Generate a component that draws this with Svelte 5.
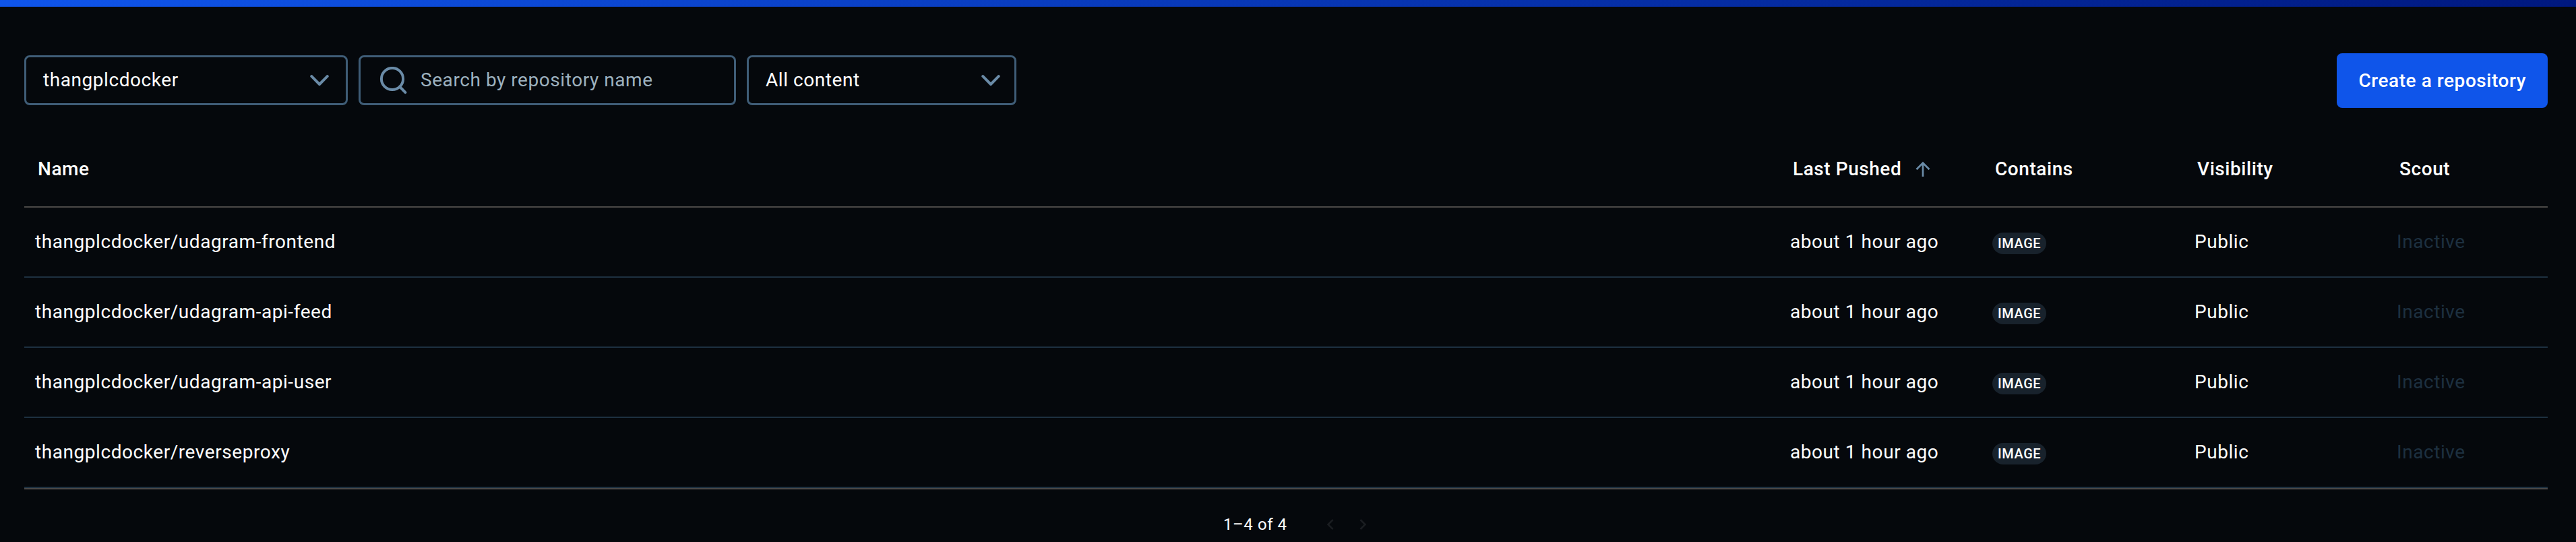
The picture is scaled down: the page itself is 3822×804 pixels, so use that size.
<script>
  const columns = ['Name', 'Last Pushed', 'Contains', 'Visibility', 'Scout'];
  const repositories = ['udagram-frontend', 'udagram-api-feed', 'udagram-api-user', 'reverseproxy'].map((name) => ({
    name: `thangplcdocker/${name}`,
    pushed: 'about 1 hour ago',
    contains: 'IMAGE',
    visibility: 'Public',
    scout: 'Inactive'
  }));
</script>

{#snippet chevron()}
  <svg class="chevron" width="28" height="17" viewBox="0 0 28 17" aria-hidden="true">
    <path d="M2.3 2.2 14 14l11.7-11.8" />
  </svg>
{/snippet}

<div class="page">
  <div class="accent"></div>
  <main>
    <div class="toolbar">
      <div class="field account"><span>thangplcdocker</span>{@render chevron()}</div>
      <div class="field search">
        <svg width="41" height="41" viewBox="0 0 41 41" aria-hidden="true">
          <circle cx="19" cy="18" r="16.1" />
          <path d="M30 29.5l8.4 8.6" />
        </svg>
        <span>Search by repository name</span>
      </div>
      <div class="field content"><span>All content</span>{@render chevron()}</div>
      <button type="button">Create a repository</button>
    </div>

    <div class="table">
      <div class="row head">
        {#each columns as column}
          <div class="cell">
            {column}
            {#if column === 'Last Pushed'}
              <svg class="sort" width="24" height="24" viewBox="0 0 24 24" aria-hidden="true">
                <path d="M12 23V3M2.5 12.2 12 2.7l9.5 9.5" />
              </svg>
            {/if}
          </div>
        {/each}
      </div>
      {#each repositories as repo}
        <div class="row">
          <div class="cell">{repo.name}</div>
          <div class="cell">{repo.pushed}</div>
          <div class="cell"><span class="badge">{repo.contains}</span></div>
          <div class="cell">{repo.visibility}</div>
          <div class="cell muted">{repo.scout}</div>
        </div>
      {/each}
    </div>

    <div class="pagination">
      <span>1–4 of 4</span>
      <div class="pager">
        <svg width="32" height="32" viewBox="0 0 24 24" aria-hidden="true">
          <path d="M15.41 16.59 10.83 12l4.58-4.59L14 6l-6 6 6 6z" />
        </svg>
        <svg width="32" height="32" viewBox="0 0 24 24" aria-hidden="true">
          <path d="M8.59 16.59 13.17 12 8.59 7.41 10 6l6 6-6 6z" />
        </svg>
      </div>
    </div>
  </main>
</div>

<style>
  :global(body) {
    margin: 0;
    background: #05080c;
  }

  .page {
    box-sizing: border-box;
    height: 804px;
    overflow: hidden;
    background: #05080c;
    color: #fff;
    font: 400 28px/32px Roboto, sans-serif;
    letter-spacing: 0.02em;
  }

  .accent {
    height: 10px;
    background: linear-gradient(90deg, #0f55eb, #00187f);
  }

  main {
    padding: 69px 42px 0 36px;
  }

  .toolbar {
    display: flex;
    align-items: flex-start;
    gap: 16px;
    height: 81px;
  }

  .field {
    box-sizing: border-box;
    display: flex;
    align-items: center;
    height: 74px;
    margin-top: 3px;
    border: 3px solid #3f5d77;
    border-radius: 8px;
  }

  .account {
    width: 480px;
    justify-content: space-between;
    padding: 0 25px;
  }

  .search {
    width: 560px;
    gap: 20px;
    padding-left: 28px;
    color: #9db1bf;
  }

  .search svg,
  .chevron,
  .sort {
    flex: none;
    fill: none;
    stroke: #6a8ba7;
    stroke-width: 4;
    stroke-linecap: round;
    stroke-linejoin: round;
  }

  .content {
    width: 400px;
    justify-content: space-between;
    padding: 0 21px 0 25px;
  }

  button {
    height: 81px;
    margin-left: auto;
    padding: 0 32px;
    border: 0;
    border-radius: 8px;
    background: #0f55ea;
    color: #fff;
    font: 500 28px/32px Roboto, sans-serif;
    letter-spacing: 0.02em;
  }

  .table {
    margin-top: 33px;
    border-bottom: 2px solid #4a4847;
  }

  .row {
    display: grid;
    grid-template-columns: 1fr 300px 300px 300px 240px;
    height: 102px;
    border-bottom: 2px solid #1d3040;
  }

  .cell {
    display: flex;
    align-items: center;
    padding-left: 16px;
    white-space: nowrap;
  }

  .head {
    height: 113px;
    border-color: #4a4847;
    font-weight: 500;
  }

  .head .cell {
    gap: 20px;
    padding: 2px 0 0 20px;
  }

  .sort {
    stroke-width: 2.7;
    stroke-linecap: butt;
    stroke-linejoin: miter;
  }

  .badge {
    margin-top: 4px;
    padding: 0 8px;
    border-radius: 16px;
    background: #18222c;
    font-size: 20px;
    font-weight: 500;
  }

  .muted {
    color: #1d3040;
  }

  .pagination {
    display: flex;
    align-items: center;
    gap: 48px;
    height: 103px;
    padding-left: 1779px;
    font-size: 24px;
  }

  .pager {
    display: flex;
    gap: 16px;
    fill: #1a1d21;
  }
</style>
